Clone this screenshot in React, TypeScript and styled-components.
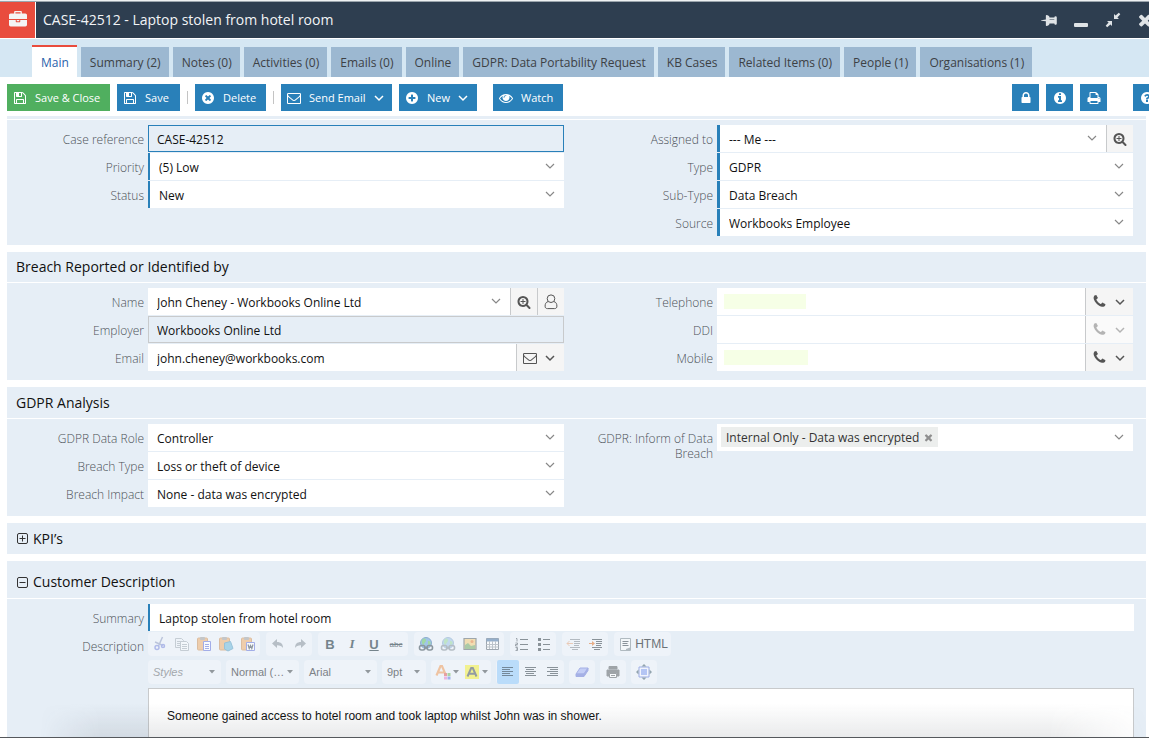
import React from "react";
import styled, { createGlobalStyle, css } from "styled-components";

const GlobalStyle = createGlobalStyle`
  *, *::before, *::after { box-sizing: border-box; }
  body {
    margin: 0;
    background: #fff;
    font-family: "Open Sans", "Noto Sans", sans-serif;
    font-size: 12px;
    color: #111;
  }
  button, input, select, textarea { font: inherit; color: inherit; margin: 0; }
  button { cursor: pointer; }
`;

const colors = {
  navy: "#2e3e50",
  red: "#e94c3d",
  blue: "#2980b9",
  green: "#50af5f",
  panel: "#e6eef6",
  strip: "#d5e7f3",
  tab: "#9cb8d1",
  line: "#c8cacc",
  addon: "#f5f5f5",
};

/* ---------- icons ---------- */

const disc =
  "q0 209-103 385.5t-279.5 279.5-385.5 103-385.5-103-279.5-279.5-103-385.5 103-385.5 279.5-279.5 385.5-103 385.5 103 279.5 279.5 103 385.5z";

const glyphs = {
  briefcase:
    "M640 256h512v-128h-512v128zm1152 640v480q0 66-47 113t-113 47h-1472q-66 0-113-47t-47-113v-480h672v160q0 26 19 45t45 19h320q26 0 45-19t19-45v-160h672zm-768 0v128h-256v-128h256zm768-480v384h-1792v-384q0-66 47-113t113-47h352v-160q0-40 28-68t68-28h576q40 0 68 28t28 68v160h352q66 0 113 47t47 113z",
  save: "M512 1536h768v-384h-768v384zm896 0h128v-896q0-14-10-38.5t-20-34.5l-281-281q-10-10-34-20t-39-10v416q0 40-28 68t-68 28h-576q-40 0-68-28t-28-68v-416h-128v1280h128v-416q0-40 28-68t68-28h832q40 0 68 28t28 68v416zm-384-928v-320q0-13-9.5-22.5t-22.5-9.5h-192q-13 0-22.5 9.5t-9.5 22.5v320q0 13 9.5 22.5t22.5 9.5h192q13 0 22.5-9.5t9.5-22.5zm640 32v928q0 40-28 68t-68 28h-1344q-40 0-68-28t-28-68v-1344q0-40 28-68t68-28h928q40 0 88 20t76 48l280 280q28 28 48 76t20 88z",
  mail: "M1664 1504v-768q-32 36-69 66-268 206-426 338-51 43-83 67t-86.5 48.5-102.5 24.5h-2q-48 0-102.5-24.5t-86.5-48.5-83-67q-158-132-426-338-37-30-69-66v768q0 13 9.5 22.5t22.5 9.5h1472q13 0 22.5-9.5t9.5-22.5zm0-1051v-24.5l-.5-13-3-12.5-5.5-9-9-7.5-14-2.5h-1472q-13 0-22.5 9.5t-9.5 22.5q0 168 147 284 193 152 401 317 6 5 35 29.5t46 37.5 44.5 31.5 50.5 27.5 43 9h2q20 0 43-9t50.5-27.5 44.5-31.5 46-37.5 35-29.5q208-165 401-317 54-43 100.5-115.5t46.5-131.5zm128-37v1088q0 66-47 113t-113 47h-1472q-66 0-113-47t-47-113v-1088q0-66 47-113t113-47h1472q66 0 113 47t47 113z",
  eye: "M1664 960q-152-236-381-353 61 104 61 225 0 185-131.5 316.5t-316.5 131.5-316.5-131.5-131.5-316.5q0-121 61-225-229 117-381 353 133 205 333.5 326.5t434.5 121.5 434.5-121.5 333.5-326.5zm-720-384q0-20-14-34t-34-14q-125 0-214.5 89.5t-89.5 214.5q0 20 14 34t34 14 34-14 14-34q0-86 61-147t147-61q20 0 34-14t14-34zm848 384q0 34-20 69-140 230-376.5 368.5t-499.5 138.5-499.5-139-376.5-368q-20-35-20-69t20-69q140-229 376.5-368t499.5-139 499.5 139 376.5 368q20 35 20 69z",
  cancel:
    "M1277 1122q0-26-19-45l-181-181 181-181q19-19 19-45 0-27-19-46l-90-90q-19-19-46-19-26 0-45 19l-181 181-181-181q-19-19-45-19-27 0-46 19l-90 90q-19 19-19 46 0 26 19 45l181 181-181 181q-19 19-19 45 0 27 19 46l90 90q19 19 46 19 26 0 45-19l181-181 181 181q19 19 45 19 27 0 46-19l90-90q19-19 19-46zm387-226" +
    disc,
  plus:
    "M1344 960v-128q0-26-19-45t-45-19h-256v-256q0-26-19-45t-45-19h-128q-26 0-45 19t-19 45v256h-256q-26 0-45 19t-19 45v128q0 26 19 45t45 19h256v256q0 26 19 45t45 19h128q26 0 45-19t19-45v-256h256q26 0 45-19t19-45zm320-64" +
    disc,
  info:
    "M1152 1376v-160q0-14-9-23t-23-9h-96v-512q0-14-9-23t-23-9h-320q-14 0-23 9t-9 23v160q0 14 9 23t23 9h96v320h-96q-14 0-23 9t-9 23v160q0 14 9 23t23 9h448q14 0 23-9t9-23zm-128-896v-160q0-14-9-23t-23-9h-192q-14 0-23 9t-9 23v160q0 14 9 23t23 9h192q14 0 23-9t9-23zm640 416" +
    disc,
  help:
    "M1024 1376v-192q0-14-9-23t-23-9h-192q-14 0-23 9t-9 23v192q0 14 9 23t23 9h192q14 0 23-9t9-23zm256-672q0-88-55.5-163t-138.5-116-170-41q-243 0-371 213-15 24 8 42l132 100q7 6 19 6 16 0 25-12 53-68 86-92 34-24 86-24 48 0 85.5 26t37.5 59q0 38-20 61t-68 45q-63 28-115.5 86.5t-52.5 125.5v36q0 14 9 23t23 9h192q14 0 23-9t9-23q0-19 21.5-49.5t54.5-49.5q32-18 49-28.5t46-35 44.5-48 28-60.5 12.5-81zm384 192" +
    disc,
  lock: "M640 768h512v-192q0-106-75-181t-181-75-181 75-75 181v192zm832 96v576q0 40-28 68t-68 28h-960q-40 0-68-28t-28-68v-576q0-40 28-68t68-28h32v-192q0-184 132-316t316-132 316 132 132 316v192h32q40 0 68 28t28 68z",
  print:
    "M448 1536h896v-256h-896v256zm0-640h896v-384h-160q-40 0-68-28t-28-68v-160h-640v640zm1152 64q0-26-19-45t-45-19-45 19-19 45 19 45 45 19 45-19 19-45zm128 0v416q0 13-9.5 22.5t-22.5 9.5h-224v160q0 40-28 68t-68 28h-960q-40 0-68-28t-28-68v-160h-224q-13 0-22.5-9.5t-9.5-22.5v-416q0-79 56.5-135.5t135.5-56.5h64v-544q0-40 28-68t68-28h672q40 0 88 20t76 48l152 152q28 28 48 76t20 88v256h64q79 0 135.5 56.5t56.5 135.5z",
  search:
    "M1088 800v64q0 13-9.5 22.5t-22.5 9.5h-224v224q0 13-9.5 22.5t-22.5 9.5h-64q-13 0-22.5-9.5t-9.5-22.5v-224h-224q-13 0-22.5-9.5t-9.5-22.5v-64q0-13 9.5-22.5t22.5-9.5h224v-224q0-13 9.5-22.5t22.5-9.5h64q13 0 22.5 9.5t9.5 22.5v224h224q13 0 22.5 9.5t9.5 22.5zm128 32q0-185-131.5-316.5t-316.5-131.5-316.5 131.5-131.5 316.5 131.5 316.5 316.5 131.5 316.5-131.5 131.5-316.5zm512 832q0 53-37.5 90.5t-90.5 37.5q-54 0-90-38l-343-342q-179 124-399 124-143 0-273.5-55.5t-225-150-150-225-55.5-273.5 55.5-273.5 150-225 225-150 273.5-55.5 273.5 55.5 225 150 150 225 55.5 273.5q0 220-124 399l343 343q37 37 37 90z",
  phone:
    "M1600 1240q0 27-10 70.5t-21 68.5q-21 50-122 106-94 51-186 51-27 0-53-3.5t-57.5-12.5-47-14.5-55.5-20.5-49-18q-98-35-175-83-127-79-264-216t-216-264q-48-77-83-175-3-9-18-49t-20.5-55.5-14.5-47-12.5-57.5-3.5-53q0-92 51-186 56-101 106-122 25-11 68.5-21t70.5-10q14 0 21 3 18 6 53 76 11 19 30 54t35 63.5 31 53.5q3 4 17.5 25t21.5 35.5 7 28.5q0 20-28.5 50t-62 55-62 53-28.5 46q0 9 5 22.5t8.5 20.5 14 24 11.5 19q76 137 174 235t235 174q2 1 19 11.5t24 14 20.5 8.5 22.5 5q18 0 46-28.5t53-62 55-62 50-28.5q14 0 28.5 7t35.5 21.5 25 17.5q25 15 53.5 31t63.5 35 54 30q70 35 76 53 3 7 3 21z",
  times:
    "M1490 1322q0 40-28 68l-136 136q-28 28-68 28t-68-28l-294-294-294 294q-28 28-68 28t-68-28l-136-136q-28-28-28-68t28-68l294-294-294-294q-28-28-28-68t28-68l136-136q28-28 68-28t68 28l294 294 294-294q28-28 68-28t68 28l136 136q28 28 28 68t-28 68l-294 294 294 294q28 28 28 68z",
  pin: "M800 864v-448q0-14-9-23t-23-9-23 9-9 23v448q0 14 9 23t23 9 23-9 9-23zm672 352q0 26-19 45t-45 19h-429l-51 483q-2 12-10.5 20.5t-20.5 8.5h-1q-27 0-32-27l-76-485h-404q-26 0-45-19t-19-45q0-123 78.5-221.5t177.5-98.5v-512q-52 0-90-38t-38-90 38-90 90-38h640q52 0 90 38t38 90-38 90-90 38v512q99 0 177.5 98.5t78.5 221.5z",
};

const Glyph = ({ name, size = 14, turn = 0 }: { name: keyof typeof glyphs; size?: number; turn?: number }) => (
  <svg width={size} height={size} viewBox="0 0 1792 1792" fill="currentColor" aria-hidden="true">
    <path d={glyphs[name]} transform={`rotate(${turn} 896 896)`} />
  </svg>
);

const Chevron = ({ stroke = 1.2 }: { stroke?: number }) => (
  <svg width="10" height="8" viewBox="0 0 10 8" fill="none" stroke="currentColor" strokeWidth={stroke} aria-hidden="true">
    <path d="M1 2l4 4 4-4" />
  </svg>
);

const Person = () => (
  <svg width="14" height="16" viewBox="0 0 14 16" fill="none" stroke="currentColor" aria-hidden="true">
    <circle cx="7" cy="4.7" r="3.8" />
    <path d="M4 7.600C1.800 8.200 1.100 10 1.100 12.200c0 1.700 1 2.400 2.400 2.400h7c1.400 0 2.400-.7 2.400-2.400 0-2.200-.7-4-2.900-4.600" />
  </svg>
);

const Shrink = () => (
  <svg width="16" height="16" viewBox="0 0 16 16" fill="currentColor" aria-hidden="true">
    <path d="M9 2v5h5l-1.600-1.600L15.300 2.200 13.800.7l-3.200 2.900zM7 14V9H2l1.600 1.600L.7 13.800l1.500 1.500 3.200-2.900z" />
  </svg>
);

const Minimise = () => (
  <svg width="16" height="16" viewBox="0 0 16 16" fill="currentColor" aria-hidden="true">
    <rect x="1" y="11" width="14" height="4" rx="1" />
  </svg>
);

const Toggle = ({ open }: { open?: boolean }) => (
  <svg width="11" height="11" viewBox="0 0 11 11" fill="none" stroke="#333" aria-hidden="true">
    <rect x=".5" y=".5" width="10" height="10" rx="1.500" />
    <path d={open ? "M2.500 5.500h6" : "M2.500 5.500h6M5.500 2.500v6"} />
  </svg>
);

/* ---------- window frame ---------- */

const Page = styled.main`
  display: flex;
  flex-direction: column;
  min-height: 100vh;
  overflow: hidden;
  position: relative;
  border-top: 1px solid #eef1f3;
  border-bottom: 1px solid #55585c;
`;

const DockShadow = styled.div`
  position: absolute;
  inset: auto 0 0 40px;
  height: 34px;
  pointer-events: none;
  background: linear-gradient(to bottom, rgba(60, 70, 80, 0), rgba(60, 70, 80, 0.11));
  mask-image: linear-gradient(to right, transparent, #000 60px, #000 calc(100% - 100px), transparent);
`;

const TitleBar = styled.header`
  display: flex;
  height: 38px;
  background: ${colors.navy};
  border-top: 1px solid #9ba5ad;
  border-bottom: 1px solid #fff;
`;

const AppBadge = styled.span`
  display: flex;
  align-items: center;
  justify-content: center;
  width: 36px;
  background: ${colors.red};
  border-right: 1px solid #fff;
  color: #f4f4f4;
`;

const WindowTitle = styled.h1`
  flex: 1;
  margin: 0;
  padding-left: 7px;
  font-size: 14px;
  line-height: 36px;
  font-weight: 400;
  color: #f2f4f6;
`;

const WindowControls = styled.div`
  display: flex;
  margin-right: -12px;
`;

const WindowButton = styled.button`
  display: flex;
  align-items: center;
  justify-content: center;
  width: 32px;
  padding: 0;
  border: 0;
  background: none;
  color: #dfe3e6;
`;

const Tabs = styled.nav`
  display: flex;
  align-items: flex-end;
  gap: 4px;
  height: 38px;
  padding-left: 32px;
  background: ${colors.strip};
`;

const Tab = styled.a<{ $active?: boolean }>`
  height: 30px;
  padding: 0 8px 0 9px;
  line-height: 32px;
  font-size: 12px;
  white-space: nowrap;
  text-decoration: none;
  color: #3d4145;
  background: ${colors.tab};
  ${(p) =>
    p.$active &&
    css`
      height: 32px;
      border-top: 2px solid ${colors.red};
      background: #fff;
      color: #2a62ab;
    `}
`;

/* ---------- action bar ---------- */

const ActionBar = styled.div`
  display: flex;
  align-items: center;
  gap: 7px;
  padding: 7px 0 5px 7px;
`;

const Action = styled.button<{ $tone?: string; $width: number }>`
  display: flex;
  align-items: center;
  gap: 8px;
  min-width: ${(p) => p.$width}px;
  height: 27px;
  padding: 0 7px 0 6px;
  border: 0;
  background: ${(p) => p.$tone ?? colors.blue};
  color: #fff;
  font-size: 11px;
  white-space: nowrap;
`;

const SquareAction = styled(Action)`
  justify-content: center;
  padding: 0;
`;

const Divider = styled.span`
  width: 1px;
  height: 13px;
  background: #c4c4c4;
`;

const Spacer = styled.span<{ $width?: number }>`
  ${(p) => (p.$width ? `width: ${p.$width}px;` : "flex: 1;")}
`;

const SideActions = styled.div`
  display: flex;
  gap: 7px;
  margin-right: -11px;
`;

/* ---------- form ---------- */

const Content = styled.div`
  flex: 1;
  display: flex;
  flex-direction: column;
  gap: 7px;
  margin: 0 3px 0 7px;
  border-top: 3px solid ${colors.panel};
  padding-top: 1px;
`;

const Section = styled.section<{ $grow?: boolean }>`
  background: ${colors.panel};
  ${(p) => p.$grow && "flex: 1; display: flex; flex-direction: column;"}
`;

const SectionTitle = styled.h2<{ $height?: number; $spaced?: boolean; $collapsed?: boolean }>`
  display: flex;
  align-items: center;
  margin: 0;
  height: ${(p) => p.$height ?? 31}px;
  padding: ${(p) => (p.$spaced ? "5px" : 0)} 9px 0;
  border-bottom: ${(p) => (p.$collapsed ? 0 : "1px solid #fff")};
  font-size: 14px;
  line-height: 18px;
  font-weight: 400;
`;

const ToggleButton = styled.button`
  display: flex;
  align-items: center;
  gap: 5px;
  padding: 0 1px;
  border: 0;
  background: none;
`;

const Columns = styled.div`
  display: grid;
  grid-template-columns: 1fr 1fr;
  column-gap: 12px;
  padding: 5px 13px 9px 0;
`;

const Wide = styled.div`
  flex: 1;
  display: flex;
  flex-direction: column;
  gap: 1px;
  padding: 5px 12px 0 0;
`;

const Column = styled.div`
  display: flex;
  flex-direction: column;
  gap: 1px;
`;

const Row = styled.div<{ $grow?: boolean }>`
  display: grid;
  grid-template-columns: 141px minmax(0, 1fr);
  ${(p) => p.$grow && "flex: 1;"}
`;

const Label = styled.label`
  padding: 7px 4px 0;
  text-align: right;
  font-weight: 300;
  line-height: 15px;
  color: #4c5157;
`;

const Box = styled.div<{ $accent?: number; $frame?: string }>`
  position: relative;
  display: flex;
  height: 27px;
  background: #fff;
  ${(p) => p.$accent && `border-left: ${p.$accent}px solid ${colors.blue};`}
  ${(p) => p.$frame && `border: 1px solid ${p.$frame}; background: ${colors.panel};`}
`;

const fieldText = css<{ $pad?: number }>`
  flex: 1;
  min-width: 0;
  border: 0;
  outline: 0;
  background: transparent;
  padding: 2px 0 0 ${(p) => p.$pad ?? 9}px;
  font-size: 12px;
`;

const TextInput = styled.input`
  ${fieldText}
`;

const Select = styled.select`
  ${fieldText}
  appearance: none;
`;

const Arrow = styled.span`
  display: flex;
  align-items: center;
  width: 19px;
  padding-bottom: 1px;
  color: #888;
  pointer-events: none;
`;

const Addon = styled.button<{ $wide?: boolean }>`
  display: flex;
  align-items: center;
  justify-content: center;
  gap: 8px;
  width: ${(p) => (p.$wide ? 48 : 27)}px;
  padding: 0 ${(p) => (p.$wide ? 3 : 0)}px 0 0;
  border: 0;
  border-left: 1px solid ${colors.line};
  background: ${colors.addon};
  color: #555;
  &:disabled { color: #b4b4b4; background: #fafafa; }
`;

const Masked = styled.span<{ $width: number }>`
  align-self: center;
  width: ${(p) => p.$width}px;
  height: 15px;
  margin-left: 7px;
  background: #f6ffe6;
`;

const Chip = styled.span`
  display: flex;
  align-items: center;
  gap: 4px;
  height: 20px;
  margin: 3px 0 0 4px;
  padding: 0 4px 0 5px;
  background: #eceeed;
  color: #333;
  white-space: nowrap;
`;

const ChipRemove = styled.button`
  display: flex;
  padding: 0;
  border: 0;
  background: none;
  color: #8f8f8f;
`;

/* ---------- rich text editor ---------- */

const Editor = styled.div`
  display: flex;
  flex-direction: column;
  gap: 4px;
  min-width: 0;
`;

const Tools = styled.div<{ $gap: number }>`
  display: flex;
  gap: ${(p) => p.$gap}px;
  height: 24px;
`;

const Group = styled.div`
  display: flex;
  padding: 0 1px;
  border-radius: 4px;
  background: #eef3f9;
`;

const Tool = styled.button<{ $on?: boolean; $width?: number }>`
  display: flex;
  align-items: center;
  justify-content: center;
  gap: 2px;
  width: ${(p) => p.$width ?? 22}px;
  padding: 0;
  border: 0;
  border-radius: 2px;
  background: ${(p) => (p.$on ? "#badcfa" : "none")};
  font: 12px "Liberation Sans", Arial, sans-serif;
  color: #6b7277;
`;

const Letter = styled.span<{ $kind: "b" | "i" | "u" | "s" }>`
  font: bold 13px "Liberation Sans", Arial, sans-serif;
  color: #75848c;
  ${(p) => p.$kind === "i" && 'font-family: "Liberation Serif", serif; font-style: italic;'}
  ${(p) => p.$kind === "u" && "text-decoration: underline;"}
  ${(p) => p.$kind === "s" && "font-size: 8px; font-weight: 400; text-decoration: line-through;"}
`;

const Combo = styled.button<{ $width: number; $muted?: boolean }>`
  display: flex;
  align-items: center;
  justify-content: space-between;
  width: ${(p) => p.$width}px;
  padding: 0 6px 0 5px;
  border: 0;
  border-radius: 4px;
  background: #eef3f9;
  font: 11px "Liberation Sans", Arial, sans-serif;
  font-style: ${(p) => (p.$muted ? "italic" : "normal")};
  color: ${(p) => (p.$muted ? "#a3a8ad" : "#7d8287")};
`;

const TextArea = styled.textarea`
  flex: 1;
  min-height: 49px;
  padding: 20px 18px 0;
  border: 1px solid ${colors.line};
  border-bottom: 0;
  outline: 0;
  resize: none;
  background: #fff;
  font: 12px/15px "Liberation Sans", Arial, sans-serif;
  color: #111;
`;

const Caret = () => (
  <svg width="6" height="4" viewBox="0 0 6 4" fill="#92989d" aria-hidden="true">
    <path d="M0 0h6L3 3.500z" />
  </svg>
);

const Mini = ({ children, faint, size = 16 }: { children: React.ReactNode; faint?: boolean; size?: number }) => (
  <svg width={size} height="16" viewBox={`0 0 ${size} 16`} fill="none" opacity={faint ? 0.35 : 0.6} aria-hidden="true">
    {children}
  </svg>
);

const Clipboard = () => (
  <>
    <rect x="1.500" y="2" width="10" height="12" rx="1" fill="#eeb57a" stroke="#cf9a68" />
    <rect x="4" y="1" width="5" height="3" rx="1" fill="#a9a9a9" />
  </>
);

const Globe = ({ faint }: { faint?: boolean }) => (
  <Mini faint={faint}>
    <circle cx="8" cy="7" r="5.500" fill="#6fa8dc" stroke="#4c7fb0" />
    <path d="M5 3c2-1 3 0 3 1.500S6 7 5.500 9C4 8 3 5 5 3zM10 5c2-.5 3 1 2.500 3L10 9z" fill="#6dc96d" />
    <rect x="1.500" y="9.500" width="5.500" height="4.500" rx="2" stroke="#4a5a63" strokeWidth="1.600" />
    <rect x="9" y="9.500" width="5.500" height="4.500" rx="2" stroke="#4a5a63" strokeWidth="1.600" />
    <path d="M6 11.700h4" stroke="#4a5a63" strokeWidth="1.600" />
  </Mini>
);

const Lines = ({ from }: { from: number[] }) => (
  <Mini>
    {[3.5, 5.5, 7.5, 9.5, 11.5].map((y, i) => (
      <path key={y} d={`M${from[i]} ${y}h${i % 2 ? 8 : 11}`} stroke="#47525a" />
    ))}
  </Mini>
);

const undoPath = "M7 3v3c4 0 6 2 6 6-1.200-2-3-2.800-6-2.800V12L2 7.500z";

const FormatBar = () => (
  <>
    <Tools $gap={6}>
      <Group>
        <Tool aria-label="Cut">
          <Mini>
            <path d="M10.500 1L6.500 10M3 6l8 3.500" stroke="#9aa6c8" strokeWidth="1.500" />
            <circle cx="5" cy="11.500" r="2" stroke="#8795e0" strokeWidth="1.500" />
            <circle cx="11" cy="10" r="1.500" stroke="#8795e0" strokeWidth="1.500" />
          </Mini>
        </Tool>
        <Tool aria-label="Copy">
          <Mini faint>
            <path d="M1.500 2.500h6l2 2v7h-8zM3 5.500h5M3 7.500h5M3 9.500h5" stroke="#7b8790" />
            <path d="M6.500 5.500h6l2 2v7h-8z" fill="#fff" stroke="#7b8790" />
            <path d="M8 8.500h5M8 10.500h5M8 12.500h5" stroke="#7b8790" />
          </Mini>
        </Tool>
        <Tool aria-label="Paste">
          <Mini>
            <Clipboard />
            <path d="M7.500 5.500h7v9h-7z" fill="#fff" stroke="#7180dd" />
            <path d="M9 8.500h4M9 10.500h4M9 12.500h4" stroke="#7180dd" />
          </Mini>
        </Tool>
        <Tool aria-label="Paste as plain text">
          <Mini>
            <Clipboard />
            <path d="M6.500 7l6-1.500 2.500 7-5 2.500-3.500-2z" fill="#79bede" stroke="#5fa2c4" />
          </Mini>
        </Tool>
        <Tool aria-label="Paste from Word">
          <Mini>
            <Clipboard />
            <path d="M6.500 6.500h8v8h-8z" fill="#fff" stroke="#7180dd" />
            <path d="M8 8.500l1.200 4 1.300-3 1.300 3 1.200-4" stroke="#4f5b66" strokeWidth="1.200" />
          </Mini>
        </Tool>
      </Group>
      <Group>
        <Tool aria-label="Undo">
          <Mini faint>
            <path d={undoPath} fill="#4f5f68" />
          </Mini>
        </Tool>
        <Tool aria-label="Redo">
          <Mini faint>
            <path d={undoPath} fill="#4f5f68" transform="matrix(-1 0 0 1 16 0)" />
          </Mini>
        </Tool>
      </Group>
      <Group>
        <Tool aria-label="Bold"><Letter $kind="b">B</Letter></Tool>
        <Tool aria-label="Italic"><Letter $kind="i">I</Letter></Tool>
        <Tool aria-label="Underline"><Letter $kind="u">U</Letter></Tool>
        <Tool aria-label="Strike through"><Letter $kind="s">abc</Letter></Tool>
      </Group>
      <Group>
        <Tool aria-label="Link"><Globe /></Tool>
        <Tool aria-label="Unlink"><Globe faint /></Tool>
        <Tool aria-label="Image">
          <Mini>
            <path d="M2 2.500h12v11H2z" fill="#f3cf84" stroke="#6a7478" strokeWidth="1.200" />
            <path d="M3 9l3-2 3 3 4-1v4H3z" fill="#7fb070" />
            <circle cx="10" cy="5.500" r="1.500" fill="#e98d4a" />
          </Mini>
        </Tool>
        <Tool aria-label="Table">
          <Mini>
            <path d="M2.500 2.500h12v11h-12z" fill="#fff" stroke="#68747e" />
            <path d="M2.500 4h12" stroke="#5b82ad" strokeWidth="3" />
            <path d="M2.500 8.500h12M2.500 11h12M5.500 5v8M8.500 5v8M11.500 5v8" stroke="#9da6ad" />
          </Mini>
        </Tool>
      </Group>
      <Group>
        <Tool aria-label="Numbered list">
          <Mini>
            <path d="M6 3.500h8M6 8.500h8M6 13.500h8" stroke="#47525a" />
            <path d="M2 2.500h1v3M1.500 7h2v1.500h-2V10h2M1.500 11.500h2v3h-2M2 13h1.500" stroke="#47525a" strokeWidth=".8" />
          </Mini>
        </Tool>
        <Tool aria-label="Bulleted list">
          <Mini>
            <path d="M7 3.500h7M7 8.500h7M7 13.500h7" stroke="#47525a" />
            <path d="M2 2h3v3H2zM2 7h3v3H2zM2 12h3v3H2z" fill="#47525a" />
          </Mini>
        </Tool>
      </Group>
      <Group>
        <Tool aria-label="Decrease indent">
          <Mini faint>
            <path d="M4 3.500h10M8 5.500h6M8 7.500h6M8 9.500h5M4 11.500h10M6 13.500h6" stroke="#47525a" />
            <path d="M1 7.500h6M3.500 5L1 7.500 3.500 10" stroke="#e0803e" />
          </Mini>
        </Tool>
        <Tool aria-label="Increase indent">
          <Mini>
            <path d="M4 3.500h10M8 5.500h6M8 7.500h6M8 9.500h5M4 11.500h10M6 13.500h6" stroke="#47525a" />
            <path d="M1 7.500h5" stroke="#e0803e" />
            <path d="M4 5l3 2.500L4 10z" fill="#e0803e" />
          </Mini>
        </Tool>
      </Group>
      <Group>
        <Tool $width={55}>
          <Mini>
            <path d="M3.500 2.500h10v12h-10z" fill="#f7fafa" stroke="#87959b" />
            <path d="M5.500 5.500h6M5.500 7.500h5M5.500 9.500h6" stroke="#47525a" />
            <path d="M9 13l4-1.500V14H9z" fill="#87959b" />
          </Mini>
          HTML
        </Tool>
      </Group>
    </Tools>
    <Tools $gap={5}>
      <Combo $width={73} $muted>Styles <Caret /></Combo>
      <Combo $width={73}>Normal (… <Caret /></Combo>
      <Combo $width={73}>Arial <Caret /></Combo>
      <Combo $width={44}>9pt <Caret /></Combo>
      <Group>
        <Tool $width={29} aria-label="Text colour">
          <Mini>
            <path d="M1.500 11.500L5.500 2h1.500l4 9.500M3 8.500h6" stroke="#efa469" strokeWidth="2.200" />
            <path d="M9 9h3v3H9z" fill="#e26a6a" />
            <path d="M12.500 9h3v3h-3z" fill="#7bbf6a" />
            <path d="M9 12.500h3v3H9z" fill="#e98bd0" />
            <path d="M12.500 12.500h3v3h-3z" fill="#6a86e2" />
          </Mini>
          <Caret />
        </Tool>
        <Tool $width={29} aria-label="Highlight colour">
          <Mini>
            <path d="M1 1h14v14H1z" fill="#f4f04c" />
            <path d="M3.500 12.500L7.200 4h1.600l3.700 8.500M5 9.800h6" stroke="#56616a" strokeWidth="2" />
          </Mini>
          <Caret />
        </Tool>
      </Group>
      <Group>
        <Tool $on aria-label="Align left"><Lines from={[2, 2, 2, 2, 2]} /></Tool>
        <Tool aria-label="Align centre"><Lines from={[3, 4, 3, 4, 3]} /></Tool>
        <Tool aria-label="Align right"><Lines from={[3, 6, 3, 6, 3]} /></Tool>
      </Group>
      <Group>
        <Tool $width={24} aria-label="Remove formatting">
          <Mini>
            <path d="M6 4h8l-4 6H2z" fill="#a9b6f5" stroke="#7584d8" />
            <path d="M2 10h8l4-6v2.500L10 12.500H2z" fill="#7584d8" stroke="#7584d8" />
          </Mini>
        </Tool>
      </Group>
      <Group>
        <Tool $width={24} aria-label="Print">
          <Mini>
            <path d="M4 2.500h8V5H4zM2 6h12v6h-2V9H4v3H2z" fill="#6c7174" stroke="#6c7174" />
            <path d="M4.500 9.500h7v4h-7zM6 11.500h4" fill="#fff" stroke="#6c7174" />
          </Mini>
        </Tool>
      </Group>
      <Group>
        <Tool $width={24} aria-label="Maximise">
          <Mini>
            <path d="M3 3h10v10H3z" fill="#f4f6ff" stroke="#6980d8" />
            <path d="M5 5h6v6H5z" fill="#8fa8f2" />
            <path d="M8 0l2.500 2.500h-5zM8 16l2.500-2.500h-5zM0 8l2.500-2.500v5zM16 8l-2.500-2.500v5z" fill="#56707e" />
          </Mini>
        </Tool>
      </Group>
    </Tools>
  </>
);

/* ---------- fields ---------- */

interface FieldProps {
  id: string;
  label: string;
  value?: string;
  accent?: number;
  frame?: string;
  masked?: number;
  children?: React.ReactNode;
}

const SelectField = ({ id, label, value, accent, children }: FieldProps) => (
  <Row>
    <Label htmlFor={id}>{label}</Label>
    <Box $accent={accent}>
      <Select id={id}>
        <option>{value}</option>
      </Select>
      <Arrow><Chevron /></Arrow>
      {children}
    </Box>
  </Row>
);

const InputField = ({ id, label, value, accent, frame, masked, children }: FieldProps) => (
  <Row>
    <Label htmlFor={id}>{label}</Label>
    <Box $accent={accent} $frame={frame}>
      {masked && <Masked $width={masked} />}
      <TextInput id={id} $pad={frame ? 8 : 9} defaultValue={value} readOnly={!!frame} />
      {children}
    </Box>
  </Row>
);

const Call = ({ off }: { off?: boolean }) => (
  <Addon $wide disabled={off} aria-label="Call">
    <Glyph name="phone" size={15} />
    <Chevron stroke={1.5} />
  </Addon>
);

const tabs = [
  "Main", "Summary (2)", "Notes (0)", "Activities (0)", "Emails (0)", "Online",
  "GDPR: Data Portability Request", "KB Cases", "Related Items (0)", "People (1)", "Organisations (1)",
];

export default function App() {
  return (
    <Page>
      <GlobalStyle />
      <TitleBar>
        <AppBadge><Glyph name="briefcase" size={18} /></AppBadge>
        <WindowTitle>CASE-42512 - Laptop stolen from hotel room</WindowTitle>
        <WindowControls>
          <WindowButton aria-label="Pin"><Glyph name="pin" size={17} turn={90} /></WindowButton>
          <WindowButton aria-label="Minimise"><Minimise /></WindowButton>
          <WindowButton aria-label="Shrink"><Shrink /></WindowButton>
          <WindowButton aria-label="Close"><Glyph name="times" size={18} /></WindowButton>
        </WindowControls>
      </TitleBar>
      <Tabs>
        {tabs.map((name, i) => (
          <Tab key={name} href="#" $active={i === 0}>{name}</Tab>
        ))}
      </Tabs>
      <ActionBar>
        <Action $tone={colors.green} $width={103}><Glyph name="save" />Save &amp; Close</Action>
        <Action $width={63}><Glyph name="save" />Save</Action>
        <Divider />
        <Action $width={71}><Glyph name="cancel" />Delete</Action>
        <Divider />
        <Action $width={111}><Glyph name="mail" />Send Email<Chevron stroke={1.5} /></Action>
        <Action $width={78}><Glyph name="plus" />New<Chevron stroke={1.5} /></Action>
        <Spacer $width={2} />
        <Action $width={70}><Glyph name="eye" />Watch</Action>
        <Spacer />
        <SideActions>
          <SquareAction $width={27} aria-label="Lock"><Glyph name="lock" /></SquareAction>
          <SquareAction $width={27} aria-label="Information"><Glyph name="info" /></SquareAction>
          <SquareAction $width={27} aria-label="Print"><Glyph name="print" /></SquareAction>
          <Spacer $width={12} />
          <SquareAction $width={27} aria-label="Help"><Glyph name="help" /></SquareAction>
        </SideActions>
      </ActionBar>

      <Content>
        <Section>
          <Columns>
            <Column>
              <InputField id="ref" label="Case reference" value="CASE-42512" frame={colors.blue} />
              <SelectField id="priority" label="Priority" value="(5) Low" accent={2} />
              <SelectField id="status" label="Status" value="New" accent={2} />
            </Column>
            <Column>
              <SelectField id="assigned" label="Assigned to" value="--- Me ---" accent={3}>
                <Addon aria-label="Find user"><Glyph name="search" /></Addon>
              </SelectField>
              <SelectField id="type" label="Type" value="GDPR" accent={3} />
              <SelectField id="subtype" label="Sub-Type" value="Data Breach" accent={3} />
              <SelectField id="source" label="Source" value="Workbooks Employee" accent={3} />
            </Column>
          </Columns>
        </Section>

        <Section>
          <SectionTitle>Breach Reported or Identified by</SectionTitle>
          <Columns>
            <Column>
              <SelectField id="name" label="Name" value="John Cheney - Workbooks Online Ltd">
                <Addon aria-label="Find person"><Glyph name="search" /></Addon>
                <Addon aria-label="Open person"><Person /></Addon>
              </SelectField>
              <InputField id="employer" label="Employer" value="Workbooks Online Ltd" frame={colors.line} />
              <InputField id="email" label="Email" value="john.cheney@workbooks.com">
                <Addon $wide aria-label="Send email"><Glyph name="mail" /><Chevron stroke={1.5} /></Addon>
              </InputField>
            </Column>
            <Column>
              <InputField id="tel" label="Telephone" masked={82}><Call /></InputField>
              <InputField id="ddi" label="DDI"><Call off /></InputField>
              <InputField id="mobile" label="Mobile" masked={84}><Call /></InputField>
            </Column>
          </Columns>
        </Section>

        <Section>
          <SectionTitle $height={32}>GDPR Analysis</SectionTitle>
          <Columns>
            <Column>
              <SelectField id="role" label="GDPR Data Role" value="Controller" />
              <SelectField id="breach" label="Breach Type" value="Loss or theft of device" />
              <SelectField id="impact" label="Breach Impact" value="None - data was encrypted" />
            </Column>
            <Column>
              <Row>
                <Label htmlFor="inform">GDPR: Inform of Data Breach</Label>
                <Box>
                  <Chip>
                    Internal Only - Data was encrypted
                    <ChipRemove aria-label="Remove"><Glyph name="times" size={11} /></ChipRemove>
                  </Chip>
                  <TextInput id="inform" />
                  <Arrow><Chevron /></Arrow>
                </Box>
              </Row>
            </Column>
          </Columns>
        </Section>

        <Section>
          <SectionTitle $collapsed>
            <ToggleButton aria-expanded="false"><Toggle />KPI’s</ToggleButton>
          </SectionTitle>
        </Section>

        <Section $grow>
          <SectionTitle $height={38} $spaced>
            <ToggleButton aria-expanded="true"><Toggle open />Customer Description</ToggleButton>
          </SectionTitle>
          <Wide>
            <InputField id="summary" label="Summary" value="Laptop stolen from hotel room" accent={2} />
            <Row $grow>
              <Label htmlFor="description">Description</Label>
              <Editor>
                <FormatBar />
                <TextArea
                  id="description"
                  rows={1}
                  defaultValue="Someone gained access to hotel room and took laptop whilst John was in shower."
                />
              </Editor>
            </Row>
          </Wide>
        </Section>
      </Content>
      <DockShadow />
    </Page>
  );
}
